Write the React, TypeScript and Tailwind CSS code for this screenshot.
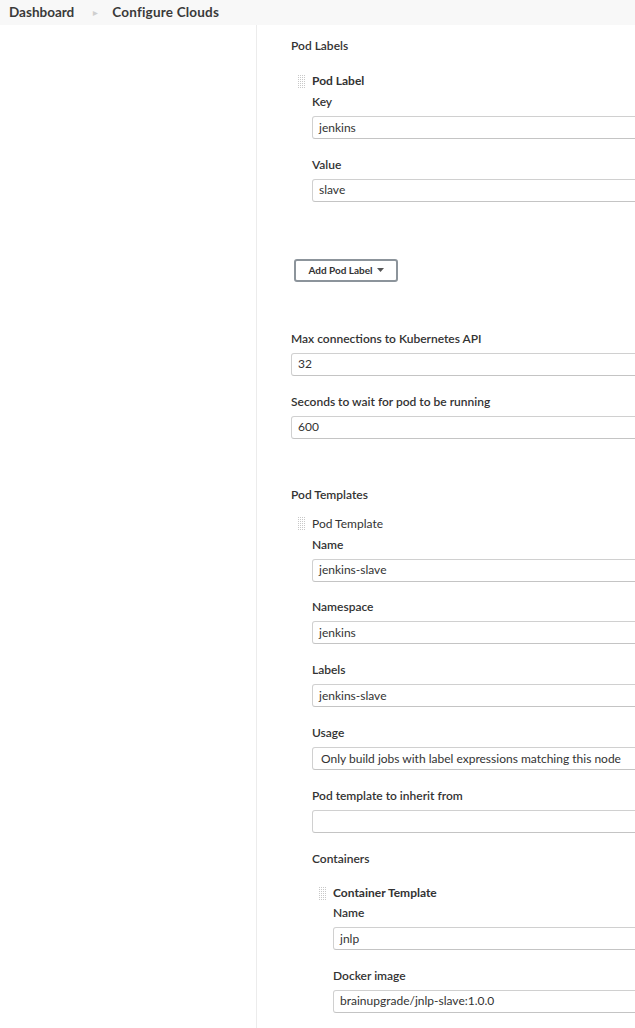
import React from 'react';

const font = { fontFamily: 'Lato, "Liberation Sans", sans-serif' };

function Handle() {
  // dotted drag handle beside repeatable items
  return (
    <svg width="9" height="15" viewBox="0 0 9 15" className="shrink-0">
      {[0, 1, 2, 3, 4, 5, 6].map((r) =>
        [0, 1, 2, 3].map((c) => (
          <rect key={`${r}-${c}`} x={c * 2 + 1} y={r * 2 + 1} width="1" height="1" fill="#c8c8c8" />
        ))
      )}
    </svg>
  );
}

function Field({ label, value, select }: { label: string; value: string; select?: boolean }) {
  return (
    <div className="flex flex-col mb-[15.9px]">
      <div className="h-[20px] leading-[20px] text-[12px] font-semibold text-[#333]">{label}</div>
      <div
        className={
          'mt-[4px] h-[23px] w-[600px] border border-[#d0d0d0] border-b-[#c4c4c4] rounded-[3px] bg-white flex items-center text-[12px] text-[#333] ' +
          (select ? 'pl-[8px]' : 'pl-[6px]')
        }
      >
        {value}
      </div>
    </div>
  );
}

function ItemHeading({ title, bold }: { title: string; bold?: boolean }) {
  return (
    <div className="flex items-center h-[20px] ml-[-15px] gap-[6px]">
      <Handle />
      <span className={'text-[12px] text-[#333] ' + (bold ? 'font-bold' : 'font-normal')}>{title}</span>
    </div>
  );
}

export default function App() {
  return (
    <div className="w-[635px] h-[1028px] overflow-hidden bg-white flex flex-col" style={font}>
      <div className="h-[25px] shrink-0 bg-[#f8f8f8] flex items-center pl-[9px] text-[13.5px] font-bold text-[#3a3a3a]">
        <span>Dashboard</span>
        <span className="ml-[19px] mr-[14px] text-[#cfcfcf] text-[6px]">▶</span>
        <span className="tracking-[0.2px]">Configure Clouds</span>
      </div>
      <div className="flex flex-1">
        <div className="w-[257px] shrink-0 border-r border-[#ececec]" />
        <div className="flex-1 pl-[34px] pt-[11px] flex flex-col">
          <div className="h-[20px] leading-[20px] text-[12px] font-semibold text-[#333]">Pod Labels</div>
          <div className="pl-[21px] mt-[15px] flex flex-col">
            <ItemHeading title="Pod Label" bold />
            <div className="mt-[1px]" />
            <Field label="Key" value="jenkins" />
            <Field label="Value" value="slave" />
          </div>
          <div className="mt-[41px] ml-[3px]">
            <button className="h-[23px] w-[104px] border-2 border-[#8c949b] rounded-[3px] bg-white text-[10px] font-bold text-[#333] flex items-center justify-center gap-[4px]">
              Add Pod Label
              <svg width="7" height="4" viewBox="0 0 7 4">
                <path d="M0 0h7L3.5 4z" fill="#555" />
              </svg>
            </button>
          </div>
          <div className="mt-[47px]" />
          <Field label="Max connections to Kubernetes API" value="32" />
          <Field label="Seconds to wait for pod to be running" value="600" />
          <div className="mt-[30px] h-[20px] leading-[20px] text-[12px] font-semibold text-[#333]">Pod Templates</div>
          <div className="pl-[21px] mt-[9px] flex flex-col">
            <ItemHeading title="Pod Template" />
            <div className="mt-[1px]" />
            <Field label="Name" value="jenkins-slave" />
            <Field label="Namespace" value="jenkins" />
            <Field label="Labels" value="jenkins-slave" />
            <Field label="Usage" value="Only build jobs with label expressions matching this node" select />
            <Field label="Pod template to inherit from" value="" />
            <div className="h-[20px] leading-[20px] text-[12px] font-semibold text-[#333]">Containers</div>
            <div className="pl-[21px] mt-[14px] flex flex-col">
              <ItemHeading title="Container Template" bold />
              <Field label="Name" value="jnlp" />
              <Field label="Docker image" value="brainupgrade/jnlp-slave:1.0.0" />
            </div>
          </div>
        </div>
      </div>
    </div>
  );
}
